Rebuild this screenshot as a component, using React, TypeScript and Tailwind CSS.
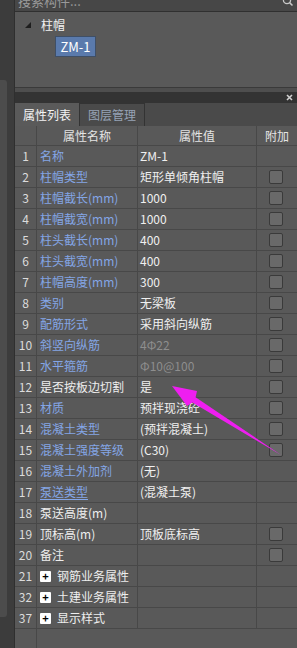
import React from "react";

type Row = {
  no: number;
  name: string;
  value?: string;
  blue?: boolean;
  dim?: boolean;
  check?: boolean;
  link?: boolean;
  group?: boolean;
};

const rows: Row[] = [
  { no: 1, name: "名称", value: "ZM-1", blue: true },
  { no: 2, name: "柱帽类型", value: "矩形单倾角柱帽", blue: true, check: true },
  { no: 3, name: "柱帽截长(mm)", value: "1000", blue: true, check: true },
  { no: 4, name: "柱帽截宽(mm)", value: "1000", blue: true, check: true },
  { no: 5, name: "柱头截长(mm)", value: "400", blue: true, check: true },
  { no: 6, name: "柱头截宽(mm)", value: "400", blue: true, check: true },
  { no: 7, name: "柱帽高度(mm)", value: "300", blue: true, check: true },
  { no: 8, name: "类别", value: "无梁板", blue: true, check: true },
  { no: 9, name: "配筋形式", value: "采用斜向纵筋", blue: true, check: true },
  { no: 10, name: "斜竖向纵筋", value: "4Φ22", blue: true, dim: true, check: true },
  { no: 11, name: "水平箍筋", value: "Φ10@100", blue: true, dim: true, check: true },
  { no: 12, name: "是否按板边切割", value: "是", check: true },
  { no: 13, name: "材质", value: "预拌现浇砼", blue: true, check: true },
  { no: 14, name: "混凝土类型", value: "(预拌混凝土)", blue: true, check: true },
  { no: 15, name: "混凝土强度等级", value: "(C30)", blue: true, check: true },
  { no: 16, name: "混凝土外加剂", value: "(无)", blue: true },
  { no: 17, name: "泵送类型", value: "(混凝土泵)", blue: true, link: true },
  { no: 18, name: "泵送高度(m)" },
  { no: 19, name: "顶标高(m)", value: "顶板底标高", check: true },
  { no: 20, name: "备注", check: true },
  { no: 21, name: "钢筋业务属性", group: true },
  { no: 32, name: "土建业务属性", group: true },
  { no: 37, name: "显示样式", group: true },
];

const cell = "border-r border-[#484848] flex items-center";

function PropRow({ row }: { row: Row }) {
  return (
    <div className="grid h-[21px] grid-cols-[22px_101px_119px_1fr] border-b border-[#484848]">
      <div className={`${cell} justify-center text-[#dcdcdc]`}>{row.no}</div>
      <div
        className={`${cell} pl-[3px] whitespace-nowrap ${
          row.blue ? "text-[#84a6e6]" : "text-[#eeeeee]"
        }`}
      >
        {row.group && (
          <span className="mr-[6px] flex h-[11px] w-[11px] items-center justify-center rounded-[1px] bg-white text-[11px] leading-none font-bold text-black">
            +
          </span>
        )}
        <span className={row.link ? "underline underline-offset-2" : ""}>{row.name}</span>
      </div>
      <div
        className={`${cell} pl-[2px] whitespace-nowrap ${
          row.dim ? "text-[#8e8e8e]" : "text-[#f0f0f0]"
        }`}
      >
        {row.value}
      </div>
      <div className="flex items-center pl-[12px]">
        {row.check && (
          <span className="h-[14px] w-[14px] rounded-[2px] border border-[#3a3a3a] bg-[#696969]" />
        )}
      </div>
    </div>
  );
}

export default function App() {
  return (
    <div
      className="relative flex h-[648px] w-[297px] overflow-hidden bg-[#3c3c3c] text-[12px]"
      style={{ fontFamily: '"Noto Sans CJK SC", "Noto Sans", sans-serif' }}
    >
      {/* left scroll gutter */}
      <div className="w-[14px] shrink-0">
        <div className="mt-[80px] h-[537px] w-[7px] rounded-r-[3px] bg-[#4c4c4c]" />
      </div>

      <div className="flex min-w-0 flex-1 flex-col border-l border-[#2f2f2f]">
        {/* search box */}
        <div className="relative h-[12px] shrink-0 overflow-hidden border-b border-[#303030] bg-[#474747]">
          <span className="absolute left-[3px] top-[-9px] text-[13px] text-[#9a9a9a]">搜索构件...</span>
          <svg className="absolute right-[3px] top-[-5px]" width="12" height="12" viewBox="0 0 12 12">
            <circle cx="5" cy="5" r="3.6" fill="none" stroke="#c8c8c8" strokeWidth="1.3" />
            <path d="M7.6 7.6 L10.5 10.5" stroke="#c8c8c8" strokeWidth="1.5" />
          </svg>
        </div>

        {/* tree */}
        <div className="h-[76px] shrink-0 border-b border-[#3a3a3a] bg-[#595959]">
          <div className="mt-[5px] flex h-[16px] items-center">
            <svg className="ml-[10px]" width="6" height="6" viewBox="0 0 6 6">
              <path d="M6 0 L6 6 L0 6 Z" fill="#1e1e1e" />
            </svg>
            <span className="ml-[10px] text-[#f2f2f2]">柱帽</span>
          </div>
          <div className="ml-[40px] mt-[3px] flex h-[21px] w-[41px] items-center justify-center border border-[#3f4f66] bg-[#5a7aac] text-[13px] text-white">
            ZM-1
          </div>
        </div>

        <div className="h-[4px] shrink-0 bg-[#4e4e4e]" />

        {/* panel title bar */}
        <div className="flex h-[11px] shrink-0 items-center justify-end bg-[#333333] pr-[4px]">
          <svg width="7" height="7" viewBox="0 0 7 7">
            <path d="M1 1 L6 6 M6 1 L1 6" stroke="#d0d0d0" strokeWidth="1.6" />
          </svg>
        </div>

        {/* tabs */}
        <div className="flex h-[23px] shrink-0 bg-[#4a4a4a]">
          <div className="flex w-[65px] items-center justify-center border-r border-[#333333] bg-[#5a5a5a] text-[#f4f4f4]">
            属性列表
          </div>
          <div className="flex w-[65px] items-center justify-center border-r border-t border-[#333333] text-[#97a3b6]">
            图层管理
          </div>
        </div>

        {/* table */}
        <div className="flex flex-1 flex-col bg-[#595959]">
          <div className="grid h-[20px] shrink-0 grid-cols-[22px_101px_119px_1fr] border-b border-[#484848] text-[#e4e4e4]">
            <div className={cell} />
            <div className={`${cell} justify-center`}>属性名称</div>
            <div className={`${cell} justify-center`}>属性值</div>
            <div className="flex items-center justify-center">附加</div>
          </div>
          {rows.map((r) => (
            <PropRow key={r.no} row={r} />
          ))}
          <div className="flex-1">
            <div className="h-full w-[22px] border-r border-[#484848]" />
          </div>
        </div>
      </div>

      {/* annotation arrow */}
      <svg className="pointer-events-none absolute left-0 top-0" width="297" height="648">
        <polygon
          points="172,386 197,391 195.6,397.3 281,455 192.4,402.4 187,406"
          fill="#ee1ef0"
        />
      </svg>
    </div>
  );
}
